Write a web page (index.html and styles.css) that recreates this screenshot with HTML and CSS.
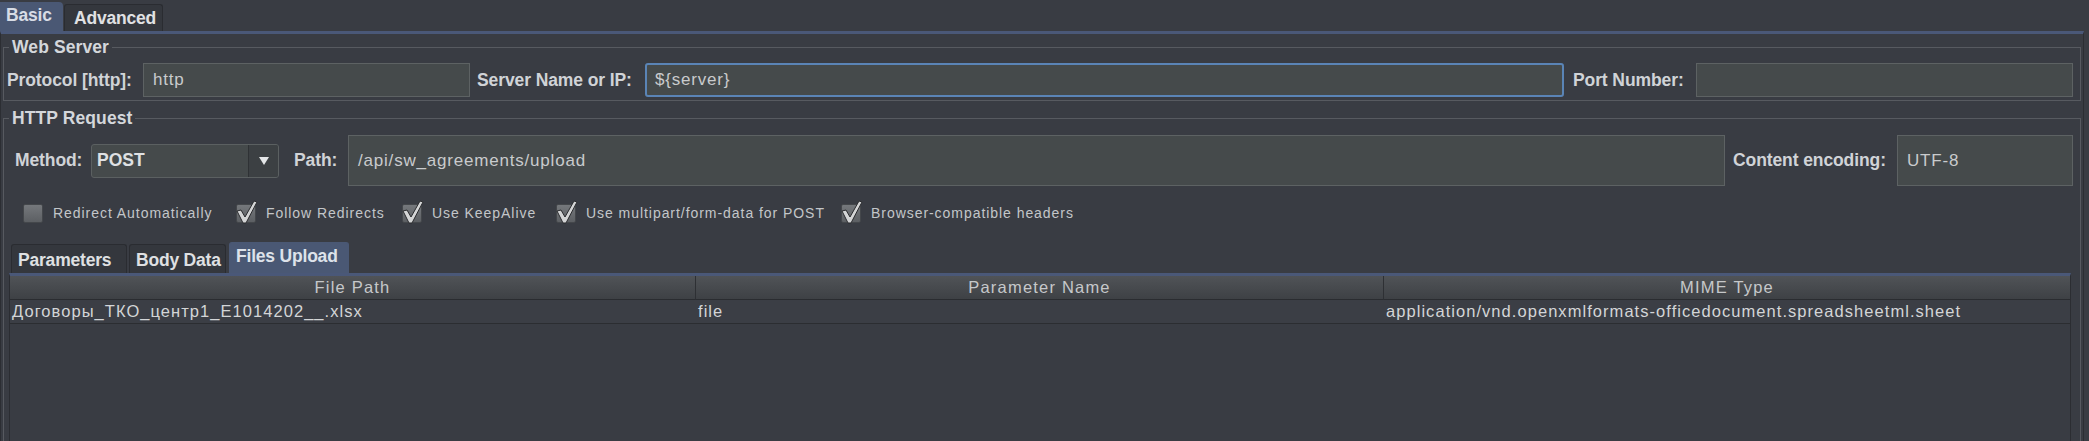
FILE: index.html
```html
<!DOCTYPE html>
<html>
<head>
<meta charset="utf-8">
<title>HTTP Request</title>
<link rel="stylesheet" href="styles.css">
</head>
<body>
<div class="app">
  <div class="tabs">
    <div class="tab sel">Basic</div>
    <div class="tab plain">Advanced</div>
  </div>
  <div class="panel">
    <fieldset class="group ws">
      <legend>Web Server</legend>
      <div class="row wsrow">
        <span class="lbl l-proto">Protocol [http]:</span>
        <div class="field f-proto">http</div>
        <span class="lbl l-server">Server Name or IP:</span>
        <div class="field f-server focus">${server}</div>
        <span class="lbl l-port">Port Number:</span>
        <div class="field f-port"></div>
      </div>
    </fieldset>
    <fieldset class="group http">
      <legend>HTTP Request</legend>
      <div class="row r1">
        <span class="lbl l-method">Method:</span>
        <div class="combo">
          <span class="combo-text">POST</span>
          <span class="combo-btn"><svg width="10" height="8" viewBox="0 0 10 8"><polygon points="0,0 10,0 5,8" fill="#e4e6e8"/></svg></span>
        </div>
        <span class="lbl l-path">Path:</span>
        <div class="field f-path">/api/sw_agreements/upload</div>
        <span class="lbl l-enc">Content encoding:</span>
        <div class="field f-enc">UTF-8</div>
      </div>
      <div class="checks">
        <div class="chk"><span class="cb"></span><span class="ctext c1">Redirect Automatically</span></div>
        <div class="chk"><span class="cb on"><svg class="tick" width="23" height="24" viewBox="0 0 23 24"><polygon points="2,11 6,10 10,17 19,1 22,2 11,23 8,23" fill="#d4d5d6" stroke="#2a2b2e" stroke-width="1"/></svg></span><span class="ctext c2">Follow Redirects</span></div>
        <div class="chk"><span class="cb on"><svg class="tick" width="23" height="24" viewBox="0 0 23 24"><polygon points="2,11 6,10 10,17 19,1 22,2 11,23 8,23" fill="#d4d5d6" stroke="#2a2b2e" stroke-width="1"/></svg></span><span class="ctext c3">Use KeepAlive</span></div>
        <div class="chk"><span class="cb on"><svg class="tick" width="23" height="24" viewBox="0 0 23 24"><polygon points="2,11 6,10 10,17 19,1 22,2 11,23 8,23" fill="#d4d5d6" stroke="#2a2b2e" stroke-width="1"/></svg></span><span class="ctext c4">Use multipart/form-data for POST</span></div>
        <div class="chk"><span class="cb on"><svg class="tick" width="23" height="24" viewBox="0 0 23 24"><polygon points="2,11 6,10 10,17 19,1 22,2 11,23 8,23" fill="#d4d5d6" stroke="#2a2b2e" stroke-width="1"/></svg></span><span class="ctext c5">Browser-compatible headers</span></div>
      </div>
      <div class="subtabs">
        <div class="stab st-params">Parameters</div>
        <div class="stab st-body">Body Data</div>
        <div class="stab st-files sel">Files Upload</div>
      </div>
      <div class="table">
        <div class="thead">
          <div class="th">File Path</div>
          <div class="th">Parameter Name</div>
          <div class="th last">MIME Type</div>
        </div>
        <div class="tr">
          <div class="td">Договоры_ТКО_центр1_Е1014202__.xlsx</div>
          <div class="td">file</div>
          <div class="td">application/vnd.openxmlformats-officedocument.spreadsheetml.sheet</div>
        </div>
        <div class="tbody-empty"></div>
      </div>
    </fieldset>
  </div>
</div>
</body>
</html>
```
FILE: styles.css
```css
* { box-sizing: border-box; }
html, body { margin: 0; padding: 0; }
body {
  width: 2089px;
  height: 441px;
  overflow: hidden;
  background: #393c43;
  font-family: "Liberation Sans", Arial, sans-serif;
  color: #cfd2d6;
}
.app { width: 2084px; }

/* top tabs */
.tabs {
  display: flex;
  align-items: flex-end;
  height: 31px;
}
.tab {
  font-weight: bold;
  font-size: 17.5px;
  letter-spacing: -0.2px;
  white-space: nowrap;
}
.tab.sel {
  width: 63px;
  height: 29px;
  line-height: 26px;
  padding-left: 6px;
  background: #4a5874;
  color: #d7dce5;
  border-radius: 0 4px 0 0;
}
.tab.plain {
  width: 99px;
  height: 27px;
  line-height: 26px;
  margin-left: 1px;
  padding-left: 9px;
  background: #34373d;
  color: #e0e1e3;
  border: 1px solid #2a2c31;
  border-bottom: none;
  border-radius: 3px 3px 0 0;
}

.panel {
  border-top: 3px solid #4a5878;
  border-left: 1px solid #2c2e33;
  border-right: 1px solid #2c2e33;
  padding: 3px 2px 0 2px;
  height: 410px;
}

/* group boxes */
fieldset.group {
  margin: 0;
  min-width: 0;
  border: 1px solid #575a60;
  padding: 5px 7px 3px 3px;
}
fieldset.group legend {
  font-size: 17.5px;
  font-weight: bold;
  line-height: 21px;
  padding: 0 3px;
  margin-left: 2px;
  color: #d4d7db;
  letter-spacing: 0.1px;
}
fieldset.http {
  margin-top: 7px;
  padding-top: 6px;
  height: 400px;
}

.row {
  display: flex;
  align-items: center;
}
.lbl {
  font-weight: bold;
  font-size: 17.5px;
  color: #d0d3d7;
  white-space: nowrap;
  letter-spacing: -0.1px;
  flex: none;
}
.field {
  flex: none;
  height: 34px;
  background: #454a4b;
  border: 1px solid #5d6263;
  font-size: 17px;
  letter-spacing: 0.8px;
  color: #c9cbcd;
  padding-left: 9px;
  display: flex;
  align-items: center;
  white-space: nowrap;
}

/* web server row */
.wsrow { height: 34px; }
.l-proto { width: 125px; }
.f-proto { width: 327px; margin-left: 11px; }
.l-server { width: 158px; margin-left: 7px; }
.f-server { width: 919px; margin-left: 10px; }
.f-server.focus {
  border: 2px solid #5a84b6;
  border-radius: 3px;
  padding-left: 8px;
}
.l-port { width: 114px; margin-left: 9px; }
.f-port { flex: 1; margin-left: 9px; }

/* http row */
.r1 { height: 51px; padding-left: 8px; }
.l-method { width: 66px; }
.combo {
  flex: none;
  width: 188px;
  height: 34px;
  margin-left: 10px;
  display: flex;
  background: #454a4b;
  border: 1px solid #5b6061;
  border-radius: 3px;
  overflow: hidden;
}
.combo-text {
  flex: 1;
  font-weight: bold;
  font-size: 17.5px;
  color: #dfe1e3;
  padding-left: 5px;
  display: flex;
  align-items: center;
}
.combo-btn {
  width: 30px;
  background: #3c4043;
  border-left: 1px solid #2f3235;
  display: flex;
  align-items: center;
  justify-content: center;
}
.l-path { width: 44px; margin-left: 15px; }
.f-path { width: 1377px; height: 51px; margin-left: 10px; }
.l-enc { width: 153px; margin-left: 8px; }
.f-enc { flex: 1; height: 51px; margin-left: 11px; }

/* checkboxes */
.checks {
  display: flex;
  align-items: center;
  height: 30px;
  margin-top: 12px;
  padding-left: 16px;
  gap: 20px;
}
.chk {
  display: flex;
  align-items: center;
  gap: 10px;
}
.cb {
  position: relative;
  flex: none;
  width: 20px;
  height: 19px;
  border: 1px solid #44474b;
  border-radius: 2px;
  background: linear-gradient(#75787c, #5c5f63);
}
.cb .tick {
  position: absolute;
  left: -2px;
  top: -5px;
}
.ctext {
  font-size: 14px;
  letter-spacing: 0.95px;
  color: #c3c6c9;
  white-space: nowrap;
  flex: none;
}
.c1 { width: 163px; }
.c2 { width: 116px; }
.c3 { width: 104px; }
.c4 { width: 235px; }
.c5 { width: 200px; }

/* sub tabs */
.subtabs {
  display: flex;
  align-items: flex-end;
  height: 31px;
  margin-top: 14px;
  padding-left: 4px;
}
.stab {
  height: 29px;
  font-weight: bold;
  font-size: 17.5px;
  letter-spacing: -0.2px;
  color: #dfe0e2;
  background: #34373d;
  border: 1px solid #2a2c31;
  border-bottom: none;
  border-radius: 3px 3px 0 0;
  padding-left: 6px;
  padding-top: 5px;
  white-space: nowrap;
}
.st-params { width: 116px; }
.st-body { width: 97px; margin-left: 2px; }
.st-files {
  width: 120px;
  margin-left: 3px;
  height: 31px;
  padding-top: 3px;
  background: #4a5874;
  border-color: #4a5874;
  color: #dde2ea;
}

/* table */
.table {
  margin: 0 2px;
  border-top: 3px solid #4a5878;
  border-left: 1px solid #2b2d32;
  border-right: 1px solid #2b2d32;
}
.thead, .tr {
  display: grid;
  grid-template-columns: 686px 688px 1fr;
}
.th {
  height: 24px;
  line-height: 23px;
  text-align: center;
  font-size: 16.5px;
  letter-spacing: 1.2px;
  color: #c6c8ca;
  background: linear-gradient(#505357, #3e4145);
  border-right: 1px solid #2e3034;
  border-bottom: 1px solid #2a2c30;
}
.th.last { border-right: none; }
.tr {
  height: 24px;
  border-bottom: 1px solid #2b2d31;
  background: #3b3e45;
}
.td {
  font-size: 16.5px;
  letter-spacing: 1.05px;
  line-height: 23px;
  color: #d3d5d7;
  padding-left: 2px;
  white-space: nowrap;
  overflow: hidden;
}
.tbody-empty { height: 200px; }
```
